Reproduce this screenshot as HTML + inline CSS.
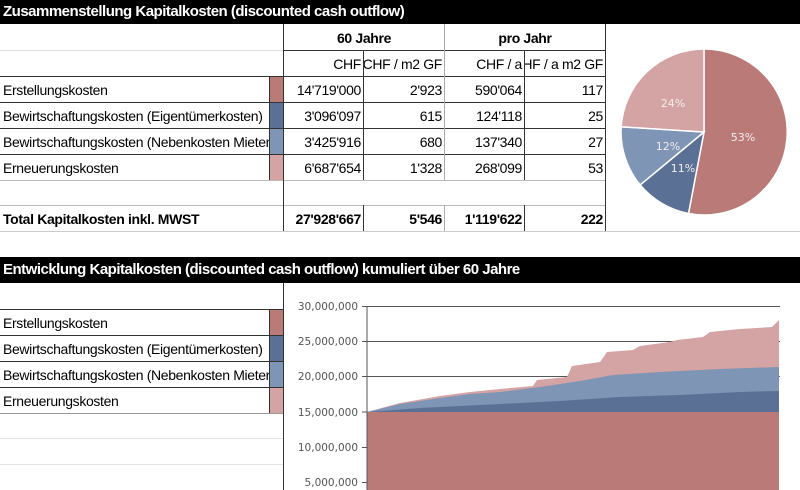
<!DOCTYPE html>
<html><head><meta charset="utf-8"><style>
*{margin:0;padding:0;box-sizing:border-box}
body{width:800px;height:490px;overflow:hidden;background:#fff;font-family:"Liberation Sans",Arial,sans-serif;position:relative;color:#000}
.a{position:absolute}
.bar{position:absolute;left:0;width:800px;background:#000;color:#fff;font-weight:bold;font-size:15px;padding-left:3px;white-space:nowrap;letter-spacing:-0.5px}
.h{position:absolute;height:1px}
.v{position:absolute;width:1px}
.t{position:absolute;font-size:14px;white-space:nowrap;overflow:hidden;line-height:26px;height:26px;letter-spacing:-0.35px}
.r{text-align:right;padding-right:2px}
.b{font-weight:bold}
</style></head><body>
<div class="bar" style="top:0;height:24px;line-height:24px">Zusammenstellung Kapitalkosten (discounted cash outflow)</div>

<div class="h" style="left:0;top:50px;width:283px;background:#ddd"></div>
<div class="h" style="left:0;top:231px;width:800px;background:#ccc"></div>
<div class="h" style="left:0;top:205px;width:605px;background:#bbb"></div>
<div class="h" style="left:0;top:180px;width:605px;background:#bbb"></div>
<div class="h" style="left:283px;top:50px;width:322px;background:#333"></div>
<div class="h" style="left:0;top:76px;width:605px;background:#333"></div>
<div class="h" style="left:0;top:102px;width:605px;background:#333"></div>
<div class="h" style="left:0;top:128px;width:605px;background:#333"></div>
<div class="h" style="left:0;top:154px;width:605px;background:#333"></div>
<div class="v" style="left:283px;top:24px;height:207px;background:#333"></div>
<div class="v" style="left:363px;top:50px;height:130px;background:#333"></div>
<div class="v" style="left:363px;top:205px;height:26px;background:#333"></div>
<div class="v" style="left:444px;top:24px;height:156px;background:#aaa"></div>
<div class="v" style="left:444px;top:205px;height:26px;background:#aaa"></div>
<div class="v" style="left:524px;top:50px;height:130px;background:#333"></div>
<div class="v" style="left:524px;top:205px;height:26px;background:#333"></div>
<div class="v" style="left:605px;top:24px;height:207px;background:#333"></div>
<div class="v" style="left:269px;top:76px;height:104px;background:#333"></div>

<div class="a" style="left:270px;top:77px;width:13px;height:25px;background:#b97a78"></div>
<div class="a" style="left:270px;top:103px;width:13px;height:25px;background:#5a7094"></div>
<div class="a" style="left:270px;top:129px;width:13px;height:25px;background:#7f95b5"></div>
<div class="a" style="left:270px;top:155px;width:13px;height:25px;background:#d4a4a4"></div>

<div class="t b" style="left:284px;top:25px;width:160px;text-align:center">60 Jahre</div>
<div class="t b" style="left:445px;top:25px;width:160px;text-align:center">pro Jahr</div>
<div class="t r" style="left:284px;top:51px;width:79px">CHF</div>
<div class="t r" style="left:364px;top:51px;width:80px;direction:rtl">CHF / m2 GF</div>
<div class="t r" style="left:445px;top:51px;width:79px">CHF / a</div>
<div class="t r" style="left:525px;top:51px;width:80px;direction:rtl">CHF / a m2 GF</div>

<div class="t" style="left:3px;top:77px;width:266px">Erstellungskosten</div>
<div class="t" style="left:3px;top:103px;width:266px">Bewirtschaftungskosten (Eigentümerkosten)</div>
<div class="t" style="left:3px;top:129px;width:266px">Bewirtschaftungskosten (Nebenkosten Mieter)</div>
<div class="t" style="left:3px;top:155px;width:266px">Erneuerungskosten</div>
<div class="t b" style="left:3px;top:206px;width:266px">Total Kapitalkosten inkl. MWST</div>

<div class="t r" style="left:284px;top:77px;width:79px">14'719'000</div>
<div class="t r" style="left:364px;top:77px;width:80px">2'923</div>
<div class="t r" style="left:445px;top:77px;width:79px">590'064</div>
<div class="t r" style="left:525px;top:77px;width:80px">117</div>
<div class="t r" style="left:284px;top:103px;width:79px">3'096'097</div>
<div class="t r" style="left:364px;top:103px;width:80px">615</div>
<div class="t r" style="left:445px;top:103px;width:79px">124'118</div>
<div class="t r" style="left:525px;top:103px;width:80px">25</div>
<div class="t r" style="left:284px;top:129px;width:79px">3'425'916</div>
<div class="t r" style="left:364px;top:129px;width:80px">680</div>
<div class="t r" style="left:445px;top:129px;width:79px">137'340</div>
<div class="t r" style="left:525px;top:129px;width:80px">27</div>
<div class="t r" style="left:284px;top:155px;width:79px">6'687'654</div>
<div class="t r" style="left:364px;top:155px;width:80px">1'328</div>
<div class="t r" style="left:445px;top:155px;width:79px">268'099</div>
<div class="t r" style="left:525px;top:155px;width:80px">53</div>
<div class="t r b" style="left:284px;top:206px;width:79px">27'928'667</div>
<div class="t r b" style="left:364px;top:206px;width:80px">5'546</div>
<div class="t r b" style="left:445px;top:206px;width:79px">1'119'622</div>
<div class="t r b" style="left:525px;top:206px;width:80px">222</div>

<svg class="a" style="left:600px;top:40px" width="200" height="190" viewBox="600 40 200 190">
<g stroke="#fff" stroke-width="1.5">
<path d="M704,132 L704,49 A83,83 0 1 1 688.5,213.5 Z" fill="#b97a78"/>
<path d="M704,132 L688.5,213.5 A83,83 0 0 1 640.1,184.9 Z" fill="#5a7094"/>
<path d="M704,132 L640.1,184.9 A83,83 0 0 1 621.2,126.8 Z" fill="#7f95b5"/>
<path d="M704,132 L621.2,126.8 A83,83 0 0 1 704,49 Z" fill="#d4a4a4"/>
</g>
<g fill="#f4ecec" font-family="DejaVu Sans,sans-serif" font-size="11" text-anchor="middle">
<text x="743" y="141">53%</text><text x="673" y="107">24%</text>
<text x="668" y="150">12%</text><text x="683" y="172">11%</text>
</g>
</svg>

<div class="bar" style="top:257px;height:26px;line-height:26px">Entwicklung Kapitalkosten (discounted cash outflow) kumuliert über 60 Jahre</div>
<div class="v" style="left:283px;top:283px;height:207px;background:#333"></div>
<div class="h" style="left:0;top:309px;width:283px;background:#333"></div>
<div class="h" style="left:0;top:335px;width:283px;background:#333"></div>
<div class="h" style="left:0;top:361px;width:283px;background:#333"></div>
<div class="h" style="left:0;top:387px;width:283px;background:#333"></div>
<div class="h" style="left:0;top:413px;width:283px;background:#999"></div>
<div class="h" style="left:0;top:438px;width:283px;background:#e4e4e4"></div>
<div class="h" style="left:0;top:464px;width:283px;background:#e4e4e4"></div>
<div class="v" style="left:269px;top:309px;height:104px;background:#333"></div>
<div class="a" style="left:270px;top:310px;width:13px;height:25px;background:#b97a78"></div>
<div class="a" style="left:270px;top:336px;width:13px;height:25px;background:#5a7094"></div>
<div class="a" style="left:270px;top:362px;width:13px;height:25px;background:#7f95b5"></div>
<div class="a" style="left:270px;top:388px;width:13px;height:25px;background:#d4a4a4"></div>
<div class="t" style="left:3px;top:310px;width:266px">Erstellungskosten</div>
<div class="t" style="left:3px;top:336px;width:266px">Bewirtschaftungskosten (Eigentümerkosten)</div>
<div class="t" style="left:3px;top:362px;width:266px">Bewirtschaftungskosten (Nebenkosten Mieter)</div>
<div class="t" style="left:3px;top:388px;width:266px">Erneuerungskosten</div>

<svg class="a" style="left:284px;top:283px" width="516" height="207" viewBox="284 283 516 207">
<g stroke="#555" stroke-width="1">
<line x1="362" y1="306.5" x2="780" y2="306.5"/>
<line x1="362" y1="341.5" x2="780" y2="341.5"/>
<line x1="362" y1="376.5" x2="780" y2="376.5"/>
<line x1="362" y1="412" x2="367" y2="412"/>
<line x1="362" y1="447.5" x2="367" y2="447.5"/>
<line x1="362" y1="482.5" x2="367" y2="482.5"/>
</g>
<path d="M367,412 L400,403 L440,396 L470,392 L500,389 L533,386 L537,380 L567,377 L572,366 L600,362 L607,352 L633,350 L640,346 L670,342 L677,340 L703,337 L710,332 L740,329 L772,327 L779,320 L779,490 L367,490 Z" fill="#d4a4a4"/>
<path d="M367,412 L400,404 L440,398 L470,394 L500,392 L540,387 L580,381 L613,375 L660,372 L720,369 L779,367 L779,490 L367,490 Z" fill="#7f95b5"/>
<path d="M367,412 L420,408 L500,404 L560,401 L620,397 L680,395 L740,392 L779,391 L779,490 L367,490 Z" fill="#5a7094"/>
<rect x="367" y="412" width="412" height="78" fill="#b97a78"/>
<line x1="367" y1="306" x2="367" y2="490" stroke="#555"/>
<g fill="#555" font-family="DejaVu Sans,sans-serif" font-size="10.5" text-anchor="end">
<text x="358" y="310">30,000,000</text><text x="358" y="345">25,000,000</text>
<text x="358" y="380">20,000,000</text><text x="358" y="416">15,000,000</text>
<text x="358" y="451">10,000,000</text><text x="358" y="486">5,000,000</text>
</g>
</svg>
</body></html>
